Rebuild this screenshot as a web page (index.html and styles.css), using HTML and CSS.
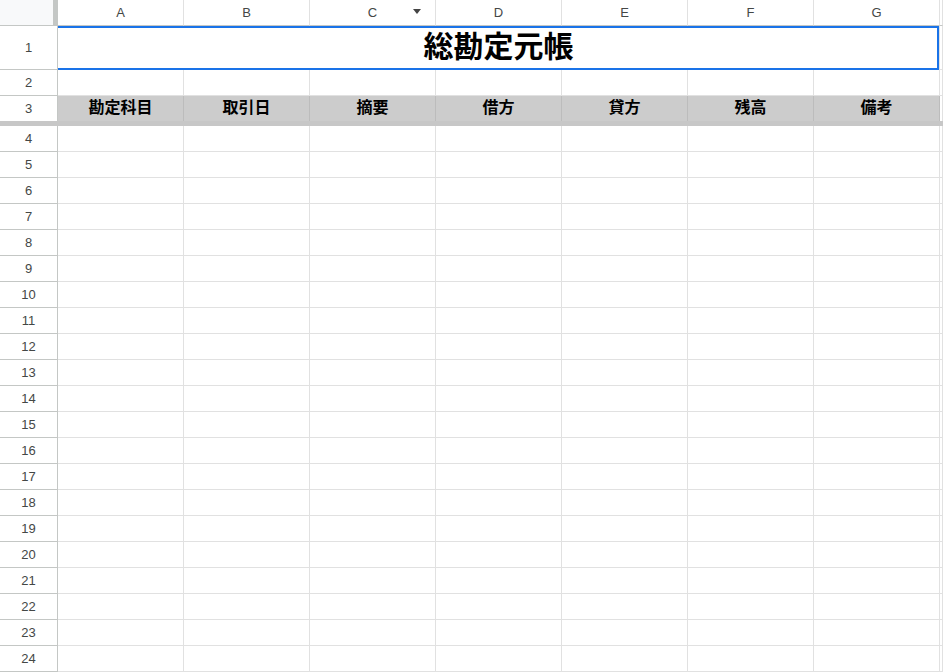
FILE: index.html
```html
<!DOCTYPE html>
<html lang="ja">

<head>
    <meta charset="utf-8">
    <title>総勘定元帳</title>
    <link rel="stylesheet" href="styles.css">
</head>

<body>
    <div class="sheet">
        <div class="row col-head">
            <div class="corner"></div>
            <div class="ch">A</div>
            <div class="ch">B</div>
            <div class="ch filter">C<span class="drop"></span></div>
            <div class="ch">D</div>
            <div class="ch">E</div>
            <div class="ch">F</div>
            <div class="ch">G</div>
            <div class="ch"></div>
        </div>

        <div class="row title-row">
            <div class="rh">1</div>
            <div class="title">総勘定元帳</div>
            <div></div>
        </div>

        <div class="row">
            <div class="rh">2</div>
            <div></div><div></div><div></div><div></div><div></div><div></div><div></div><div></div>
        </div>

        <div class="row head-row">
            <div class="rh">3</div>
            <div class="hd">勘定科目</div>
            <div class="hd">取引日</div>
            <div class="hd">摘要</div>
            <div class="hd">借方</div>
            <div class="hd">貸方</div>
            <div class="hd">残高</div>
            <div class="hd">備考</div>
            <div></div>
        </div>

        <div class="freeze"></div>

        <div class="row"><div class="rh">4</div><div></div><div></div><div></div><div></div><div></div><div></div><div></div><div></div></div>
        <div class="row"><div class="rh">5</div><div></div><div></div><div></div><div></div><div></div><div></div><div></div><div></div></div>
        <div class="row"><div class="rh">6</div><div></div><div></div><div></div><div></div><div></div><div></div><div></div><div></div></div>
        <div class="row"><div class="rh">7</div><div></div><div></div><div></div><div></div><div></div><div></div><div></div><div></div></div>
        <div class="row"><div class="rh">8</div><div></div><div></div><div></div><div></div><div></div><div></div><div></div><div></div></div>
        <div class="row"><div class="rh">9</div><div></div><div></div><div></div><div></div><div></div><div></div><div></div><div></div></div>
        <div class="row"><div class="rh">10</div><div></div><div></div><div></div><div></div><div></div><div></div><div></div><div></div></div>
        <div class="row"><div class="rh">11</div><div></div><div></div><div></div><div></div><div></div><div></div><div></div><div></div></div>
        <div class="row"><div class="rh">12</div><div></div><div></div><div></div><div></div><div></div><div></div><div></div><div></div></div>
        <div class="row"><div class="rh">13</div><div></div><div></div><div></div><div></div><div></div><div></div><div></div><div></div></div>
        <div class="row"><div class="rh">14</div><div></div><div></div><div></div><div></div><div></div><div></div><div></div><div></div></div>
        <div class="row"><div class="rh">15</div><div></div><div></div><div></div><div></div><div></div><div></div><div></div><div></div></div>
        <div class="row"><div class="rh">16</div><div></div><div></div><div></div><div></div><div></div><div></div><div></div><div></div></div>
        <div class="row"><div class="rh">17</div><div></div><div></div><div></div><div></div><div></div><div></div><div></div><div></div></div>
        <div class="row"><div class="rh">18</div><div></div><div></div><div></div><div></div><div></div><div></div><div></div><div></div></div>
        <div class="row"><div class="rh">19</div><div></div><div></div><div></div><div></div><div></div><div></div><div></div><div></div></div>
        <div class="row"><div class="rh">20</div><div></div><div></div><div></div><div></div><div></div><div></div><div></div><div></div></div>
        <div class="row"><div class="rh">21</div><div></div><div></div><div></div><div></div><div></div><div></div><div></div><div></div></div>
        <div class="row"><div class="rh">22</div><div></div><div></div><div></div><div></div><div></div><div></div><div></div><div></div></div>
        <div class="row"><div class="rh">23</div><div></div><div></div><div></div><div></div><div></div><div></div><div></div><div></div></div>
        <div class="row"><div class="rh">24</div><div></div><div></div><div></div><div></div><div></div><div></div><div></div><div></div></div>

        <!-- selected merged range A1:G1 -->
        <div class="selection"></div>
    </div>
</body>

</html>
```

FILE: styles.css
```css
:root {
    --grid-line: #e1e1e1;
    --head-line: #c4c7c5;
    --head-text: #444746;
    --select: #1a73e8;
}

body {
    margin: 0;
    background: #fff;
    font-family: "Liberation Sans", "Noto Sans CJK JP", sans-serif;
    overflow: hidden;
}

.sheet {
    position: relative;
}

.row {
    display: grid;
    grid-template-columns: 58px repeat(7, 126px) 1fr;
    grid-template-rows: 100%;
    height: 26px;
}

.row > div {
    box-sizing: border-box;
    min-height: 0;
    overflow: hidden;
    border-right: 1px solid var(--grid-line);
    border-bottom: 1px solid var(--grid-line);
}

.row > .rh {
    display: flex;
    align-items: center;
    justify-content: center;
    font-size: 13px;
    color: var(--head-text);
    border-right-color: var(--head-line);
    border-bottom-color: var(--head-line);
}

/* column letters */
.col-head > .corner {
    background: #f8f9fa;
    border-right: 5px solid var(--head-line);
    border-bottom-color: var(--head-line);
}

.col-head > .ch {
    display: flex;
    align-items: center;
    justify-content: center;
    font-size: 13px;
    color: var(--head-text);
    border-bottom-color: var(--head-line);
}

.col-head > .filter {
    position: relative;
}

.drop {
    position: absolute;
    right: 14px;
    top: 9px;
    border-left: 4px solid transparent;
    border-right: 4px solid transparent;
    border-top: 5px solid #444;
}

/* title */
.title-row {
    height: 44px;
}

.row > .title {
    grid-column: 2 / 9;
    display: flex;
    align-items: center;
    justify-content: center;
    font-size: 30px;
    line-height: 36px;
    font-weight: bold;
    color: #000;
    padding-bottom: 2px;
}

/* table header */
.head-row {
    height: 25px;
}

.head-row > div {
    border-bottom: none;
}

.row > .hd {
    background: #cccccc;
    border-right-color: #bcbcbc;
    display: flex;
    align-items: center;
    justify-content: center;
    font-size: 16px;
    line-height: 20px;
    font-weight: bold;
    color: #000;
    padding-bottom: 2px;
}

.freeze {
    height: 5px;
    background: #c7c7c7;
}

.selection {
    position: absolute;
    left: 58px;
    top: 26px;
    width: 881px;
    height: 44px;
    box-sizing: border-box;
    border: 2px solid var(--select);
    border-left: none;
    pointer-events: none;
}
```
